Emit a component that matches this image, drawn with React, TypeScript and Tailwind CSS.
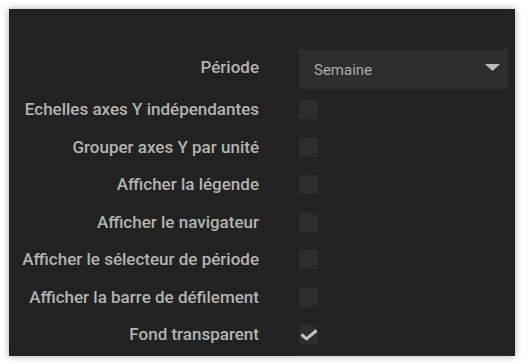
import React from 'react';

const options = [
  { label: 'Echelles axes Y indépendantes', checked: false },
  { label: 'Grouper axes Y par unité', checked: false },
  { label: 'Afficher la légende', checked: false },
  { label: 'Afficher le navigateur', checked: false },
  { label: 'Afficher le sélecteur de période', checked: false },
  { label: 'Afficher la barre de défilement', checked: false },
  { label: 'Fond transparent', checked: true },
];

function Checkbox({ checked }: { checked: boolean }) {
  return (
    <div className="w-[19px] h-[19px] bg-[#2d2d2d] flex items-center justify-center">
      {checked && (
        <svg width="18" height="12" viewBox="0 0 18 12" className="mt-[1px]">
          <path d="M1.5 5.5 L6.5 9.8 L16.5 1.5" fill="none" stroke="#c4c4c4" strokeWidth="3" />
        </svg>
      )}
    </div>
  );
}

function Select({ value }: { value: string }) {
  return (
    <div className="w-[209px] h-[40px] bg-[#2e2e2e] flex items-center justify-between pl-[15px] pr-[8px]">
      <span className="text-[15px] text-[#ababab] pt-[2px]">{value}</span>
      <svg width="15" height="7" viewBox="0 0 15 7" className="mb-[3px]">
        <path d="M0 0 H15 L7.5 7 Z" fill="#bdbdbd" />
      </svg>
    </div>
  );
}

export default function App() {
  return (
    <div className="w-[532px] h-[364px] bg-white p-[9px] pb-[8px] pr-[17px]" style={{ fontFamily: 'Roboto, sans-serif' }}>
      <div className="w-[506px] h-[347px] bg-[#222222] shadow-[0_0_7px_rgba(0,0,0,0.35)] overflow-hidden pt-[40px]">
        <div className="flex items-center h-[40px] mb-[2px]">
          <div className="w-[250px] text-right text-[17px] font-medium text-[#b3b3b3] pb-[3px]">Période</div>
          <div className="ml-[40px]">
            <Select value="Semaine" />
          </div>
        </div>
        {options.map((o) => (
          <div key={o.label} className="flex items-center h-[37.5px]">
            <div className="w-[250px] text-right text-[17px] font-medium text-[#b3b3b3] whitespace-nowrap">
              {o.label}
            </div>
            <div className="ml-[40px]">
              <Checkbox checked={o.checked} />
            </div>
          </div>
        ))}
        <div className="flex items-center h-[40px] mt-[1px]">
          <div className="w-[250px]" />
          <div className="ml-[40px] w-[209px] h-[40px] bg-[#2e2e2e]" />
        </div>
      </div>
    </div>
  );
}
